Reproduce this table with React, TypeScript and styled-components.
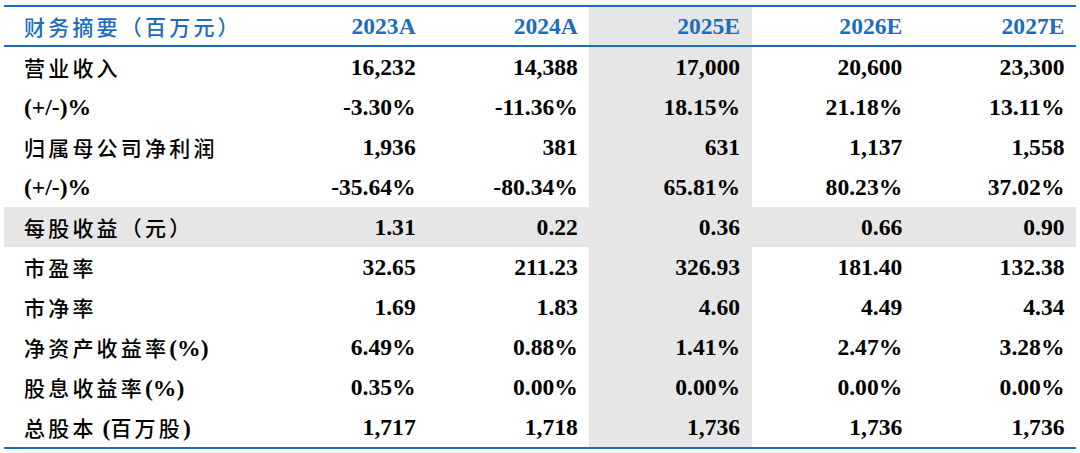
import styled, { createGlobalStyle } from 'styled-components';

const GlobalStyle = createGlobalStyle`
  html, body {
    margin: 0;
    padding: 0;
    background: #ffffff;
  }
`;

const BLUE = '#1d6cc0';
const SHADE = '#e6e6e6';

const columns = ['2023A', '2024A', '2025E', '2026E', '2027E'];
const shadedCol = 2;

const rows: { label: string; values: string[]; shade?: boolean }[] = [
  { label: '营业收入', values: ['16,232', '14,388', '17,000', '20,600', '23,300'] },
  { label: '(+/-)%', values: ['-3.30%', '-11.36%', '18.15%', '21.18%', '13.11%'] },
  { label: '归属母公司净利润', values: ['1,936', '381', '631', '1,137', '1,558'] },
  { label: '(+/-)%', values: ['-35.64%', '-80.34%', '65.81%', '80.23%', '37.02%'] },
  { label: '每股收益（元）', values: ['1.31', '0.22', '0.36', '0.66', '0.90'], shade: true },
  { label: '市盈率', values: ['32.65', '211.23', '326.93', '181.40', '132.38'] },
  { label: '市净率', values: ['1.69', '1.83', '4.60', '4.49', '4.34'] },
  { label: '净资产收益率(%)', values: ['6.49%', '0.88%', '1.41%', '2.47%', '3.28%'] },
  { label: '股息收益率(%)', values: ['0.35%', '0.00%', '0.00%', '0.00%', '0.00%'] },
  { label: '总股本 (百万股)', values: ['1,717', '1,718', '1,736', '1,736', '1,736'] },
];

// split a label into CJK runs and latin runs, they use different fonts
const splitLabel = (text: string) =>
  text.split(/([\u4e00-\u9fff（）]+)/).filter(Boolean);

const isCjk = (part: string) => /[\u4e00-\u9fff（）]/.test(part);

const Label = ({ text }: { text: string }) => (
  <LabelText>
    {splitLabel(text).map((part, i) =>
      isCjk(part) ? <Cjk key={i}>{part}</Cjk> : <Latin key={i}>{part}</Latin>
    )}
  </LabelText>
);

const App = () => {
  return (
    <>
      <GlobalStyle />
      <Table.Wrap>
        <Table.Head>
          <Table.LabelCell $head>
            <Label text='财务摘要（百万元）' />
          </Table.LabelCell>
          {columns.map((col, i) => (
            <Table.ValueCell key={col} $head $shade={i === shadedCol}>
              {col}
            </Table.ValueCell>
          ))}
        </Table.Head>
        <Table.Body>
          {rows.map((row, r) => (
            <Table.Row key={r} $shade={row.shade}>
              <Table.LabelCell>
                <Label text={row.label} />
              </Table.LabelCell>
              {row.values.map((v, i) => (
                <Table.ValueCell key={i} $shade={i === shadedCol}>
                  {v}
                </Table.ValueCell>
              ))}
            </Table.Row>
          ))}
        </Table.Body>
      </Table.Wrap>
    </>
  );
};

const LabelText = styled.span`
  white-space: pre;
`;

const Cjk = styled.span`
  font-family: 'Noto Sans CJK SC', sans-serif;
  font-size: 21px;
  font-weight: 500;
  letter-spacing: 3.2px;
`;

const Latin = styled.span`
  font-family: 'Liberation Serif', 'Times New Roman', serif;
  font-size: 23.6px;
  font-weight: 700;
`;

const Table = {
  Wrap: styled.div`
    width: 1072px;
    margin: 5px 0 0 4px;
    border-bottom: 2px solid ${BLUE};
  `,
  Head: styled.div`
    display: grid;
    grid-template-columns: 261px repeat(5, 1fr);
    height: 38px;
    border-top: 2px solid ${BLUE};
    border-bottom: 2px solid ${BLUE};
    color: ${BLUE};
  `,
  Body: styled.div`
    display: flex;
    flex-direction: column;
    color: #000000;
  `,
  Row: styled.div<{ $shade?: boolean }>`
    display: grid;
    grid-template-columns: 261px repeat(5, 1fr);
    height: 40px;
    background: ${({ $shade }) => ($shade ? SHADE : 'transparent')};
  `,
  LabelCell: styled.div<{ $head?: boolean }>`
    display: flex;
    align-items: center;
    padding-left: 20px;
    color: ${({ $head }) => ($head ? BLUE : '#000000')};
  `,
  ValueCell: styled.div<{ $head?: boolean; $shade?: boolean }>`
    display: flex;
    align-items: center;
    justify-content: flex-end;
    padding-right: 11.5px;
    font-family: 'Liberation Serif', 'Times New Roman', serif;
    font-size: 23.6px;
    font-weight: 700;
    color: ${({ $head }) => ($head ? BLUE : '#000000')};
    background: ${({ $shade }) => ($shade ? SHADE : 'transparent')};
  `,
};

export default App;
